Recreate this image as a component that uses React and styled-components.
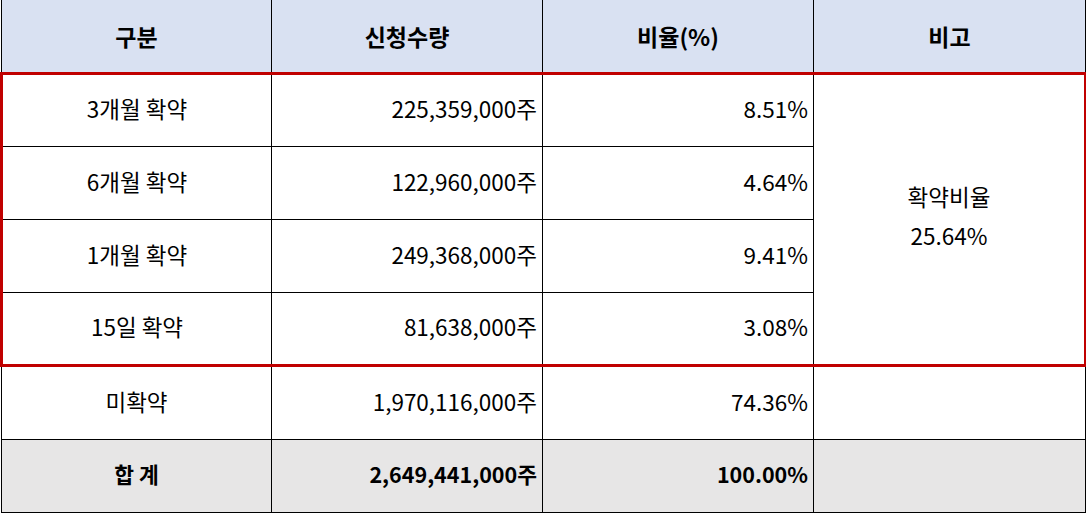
import React from "react";
import styled, { createGlobalStyle } from "styled-components";

const rows = [
  { label: "3개월 확약", qty: "225,359,000주", rate: "8.51%" },
  { label: "6개월 확약", qty: "122,960,000주", rate: "4.64%" },
  { label: "1개월 확약", qty: "249,368,000주", rate: "9.41%" },
  { label: "15일 확약", qty: "81,638,000주", rate: "3.08%" },
];

const App = () => {
  return (
    <>
      <GlobalStyle />
      <Table>
        <colgroup>
          <col style={{ width: 270 }} />
          <col style={{ width: 271 }} />
          <col style={{ width: 271 }} />
          <col style={{ width: 272 }} />
        </colgroup>
        <thead>
          <tr>
            <HeadCell>구분</HeadCell>
            <HeadCell>신청수량</HeadCell>
            <HeadCell>비율(%)</HeadCell>
            <HeadCell>비고</HeadCell>
          </tr>
        </thead>
        <tbody>
          {rows.map((row, i) => {
            const top = i === 0;
            const bottom = i === rows.length - 1;
            const h = top || bottom ? 71 : 72;
            return (
              <tr key={row.label}>
                <Cell $h={h} $lockTop={top} $lockBottom={bottom} $lockLeft>
                  {row.label}
                </Cell>
                <NumCell $h={h} $lockTop={top} $lockBottom={bottom}>
                  {row.qty}
                </NumCell>
                <NumCell $h={h} $lockTop={top} $lockBottom={bottom}>
                  {row.rate}
                </NumCell>
                {top && (
                  <NoteCell rowSpan={4} $lockTop $lockBottom $lockRight>
                    확약비율
                    <br />
                    25.64%
                  </NoteCell>
                )}
              </tr>
            );
          })}
          <tr>
            <Cell>미확약</Cell>
            <NumCell>1,970,116,000주</NumCell>
            <NumCell>74.36%</NumCell>
            <Cell />
          </tr>
          <TotalRow>
            <Cell $bold>합 계</Cell>
            <NumCell $bold>2,649,441,000주</NumCell>
            <NumCell $bold>100.00%</NumCell>
            <Cell />
          </TotalRow>
        </tbody>
      </Table>
    </>
  );
};

const GlobalStyle = createGlobalStyle`
  html, body {
    margin: 0;
    padding: 0;
    background: #ffffff;
  }
  body {
    font-family: "Noto Sans CJK KR", "Noto Sans", sans-serif;
    color: #000;
  }
`;

const Table = styled.table`
  border-collapse: collapse;
  table-layout: fixed;
  width: 1085px;
  font-size: 22.5px;
  color: #000;
`;

const HeadCell = styled.th`
  height: 72px;
  padding: 0;
  background: #d9e1f2;
  font-weight: 700;
  font-size: 23px;
  text-align: center;
  vertical-align: middle;
  border-left: 1px solid #000;
  border-right: 1px solid #000;
`;

const Cell = styled.td`
  height: ${(p) => (p.$h ?? 72) - 5}px;
  padding: 0 5px 5px;
  text-align: center;
  vertical-align: middle;
  border: 1px solid #000;
  white-space: nowrap;
  font-weight: ${(p) => (p.$bold ? 700 : 400)};
  font-size: ${(p) => (p.$bold ? "21.5px" : "22.5px")};
  ${(p) => p.$lockTop && "border-top: 3px solid #c00000;"}
  ${(p) => p.$lockBottom && "border-bottom: 3px solid #c00000;"}
  ${(p) => p.$lockLeft && "border-left: 3px solid #c00000;"}
  ${(p) => p.$lockRight && "border-right: 3px solid #c00000;"}
`;

const NumCell = styled(Cell)`
  text-align: right;
`;

const NoteCell = styled(Cell)`
  height: auto;
  line-height: 39px;
  padding-bottom: 8px;
`;

const TotalRow = styled.tr`
  background: #e7e6e6;
`;

export default App;
